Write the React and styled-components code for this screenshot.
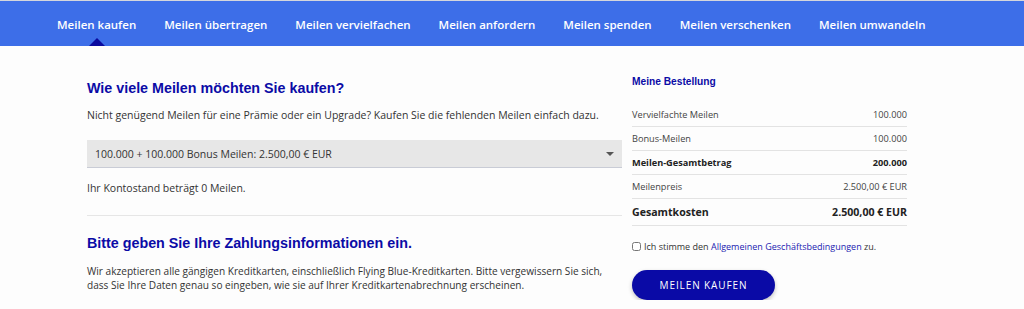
import React, { useState } from 'react';
import styled, { createGlobalStyle } from 'styled-components';

const GlobalStyle = createGlobalStyle`
    body {
        margin: 0;
        background: #fdfdfd;
        font-family: "Open Sans", "Liberation Sans", sans-serif;
        color: #333;
    }
`

const navItems = [
    'Meilen kaufen',
    'Meilen übertragen',
    'Meilen vervielfachen',
    'Meilen anfordern',
    'Meilen spenden',
    'Meilen verschenken',
    'Meilen umwandeln',
]

const orderRows = [
    { label: 'Vervielfachte Meilen', value: '100.000' },
    { label: 'Bonus-Meilen', value: '100.000' },
    { label: 'Meilen-Gesamtbetrag', value: '200.000', strong: true },
    { label: 'Meilenpreis', value: '2.500,00 € EUR' },
    { label: 'Gesamtkosten', value: '2.500,00 € EUR', total: true },
]

export default function App() {

    const [agreed, setAgreed] = useState(false)

    return (
        <>
            <GlobalStyle />
            <NavBar>
                <NavList>
                    {navItems.map((item, i) => (
                        <NavItem key={item} active={i === 0}>{item}</NavItem>
                    ))}
                </NavList>
            </NavBar>

            <Page>
                <Main>
                    <Heading>Wie viele Meilen möchten Sie kaufen?</Heading>
                    <Text>Nicht genügend Meilen für eine Prämie oder ein Upgrade? Kaufen Sie die fehlenden Meilen einfach dazu.</Text>
                    <SelectBox>
                        <span>100.000 + 100.000 Bonus Meilen: 2.500,00 € EUR</span>
                        <Caret />
                    </SelectBox>
                    <Text>Ihr Kontostand beträgt 0 Meilen.</Text>
                    <Divider />
                    <Heading second>Bitte geben Sie Ihre Zahlungsinformationen ein.</Heading>
                    <Text small>Wir akzeptieren alle gängigen Kreditkarten, einschließlich Flying Blue-Kreditkarten. Bitte vergewissern Sie sich, dass Sie Ihre Daten genau so eingeben, wie sie auf Ihrer Kreditkartenabrechnung erscheinen.</Text>
                </Main>

                <Aside>
                    <OrderTitle>Meine Bestellung</OrderTitle>
                    <OrderTable>
                        {orderRows.map(row => (
                            <OrderRow key={row.label} strong={row.strong} total={row.total}>
                                <span>{row.label}</span>
                                <span>{row.value}</span>
                            </OrderRow>
                        ))}
                    </OrderTable>
                    <Terms>
                        <CheckBox type="checkbox" checked={agreed} onChange={() => setAgreed(!agreed)} />
                        <span>Ich stimme den <TermsLink href="#">Allgemeinen Geschäftsbedingungen</TermsLink> zu.</span>
                    </Terms>
                    <BuyButton>MEILEN KAUFEN</BuyButton>
                </Aside>
            </Page>
        </>
    )
}


const NavBar = styled.nav`
    border-top: 1px solid #d4d6dc;
    background: #3d6ee8;
    height: 45px;
`

const NavList = styled.div`
    display: flex;
    align-items: stretch;
    height: 100%;
    padding-left: 43px;
`

const NavItem = styled.div`
    position: relative;
    display: flex;
    align-items: center;
    padding: 2px 14px 0;
    color: #fff;
    font-size: 11.5px;
    font-weight: 600;
    white-space: nowrap;

    &::after {
        content: '';
        display: ${p => p.active ? 'block' : 'none'};
        position: absolute;
        left: 50%;
        bottom: 0;
        margin-left: -8px;
        border-left: 8px solid transparent;
        border-right: 8px solid transparent;
        border-bottom: 8px solid #0a0a9e;
    }
`

const Page = styled.div`
    display: flex;
    padding: 31px 0 0 87px;
`

const Main = styled.div`
    width: 535px;
`

const Aside = styled.div`
    width: 275px;
    margin-left: 10px;
    margin-top: -2px;
`

const Heading = styled.h2`
    margin: ${p => p.second ? '16px 0 10px' : '0 0 9px'};
    font-family: "Liberation Sans", Arial, sans-serif;
    font-size: 14.3px;
    font-weight: 700;
    color: #0b0ba6;
    line-height: 22px;
`

const Text = styled.p`
    margin: 0;
    font-size: ${p => p.small ? '10.1px' : '10.5px'};
    line-height: 14px;
    color: #333;
`

const SelectBox = styled.div`
    display: flex;
    align-items: center;
    justify-content: space-between;
    margin: 18px 0 13px;
    height: 27px;
    padding: 0 8px;
    background: #e7e7e7;
    border-bottom: 1px solid #c9ccd6;
    font-size: 10.5px;
    color: #333;
`

const Caret = styled.span`
    border-left: 4px solid transparent;
    border-right: 4px solid transparent;
    border-top: 4px solid #555;
`

const Divider = styled.div`
    margin-top: 20px;
    border-top: 1px solid #e6e6e6;
`

const OrderTitle = styled.h3`
    margin: 0 0 14px;
    font-family: "Liberation Sans", Arial, sans-serif;
    font-size: 10.2px;
    font-weight: 700;
    color: #0b0ba6;
    line-height: 14px;
`

const OrderTable = styled.div`
    display: flex;
    flex-direction: column;
`

const OrderRow = styled.div`
    display: flex;
    justify-content: space-between;
    align-items: center;
    height: ${p => p.total ? '26px' : '23px'};
    border-bottom: 1px solid #e3e3e3;
    font-size: ${p => p.total ? '10.6px' : '9.2px'};
    font-weight: ${p => (p.strong || p.total) ? 700 : 400};
    color: ${p => (p.strong || p.total) ? '#222' : '#444'};
`

const Terms = styled.label`
    display: flex;
    align-items: center;
    margin-top: 14px;
    font-size: 9px;
    color: #333;
`

const CheckBox = styled.input`
    width: 9px;
    height: 9px;
    margin: 0 3px 0 0;
`

const TermsLink = styled.a`
    color: #1a1ab0;
    text-decoration: none;
`

const BuyButton = styled.button`
    display: block;
    margin-top: 17px;
    width: 143px;
    height: 30px;
    border: none;
    border-radius: 15px;
    background: #0a0aa6;
    color: #fff;
    font-family: "Open Sans", sans-serif;
    font-size: 10px;
    letter-spacing: 0.9px;
    box-shadow: 0 2px 4px rgba(0, 0, 0, 0.25);
`
